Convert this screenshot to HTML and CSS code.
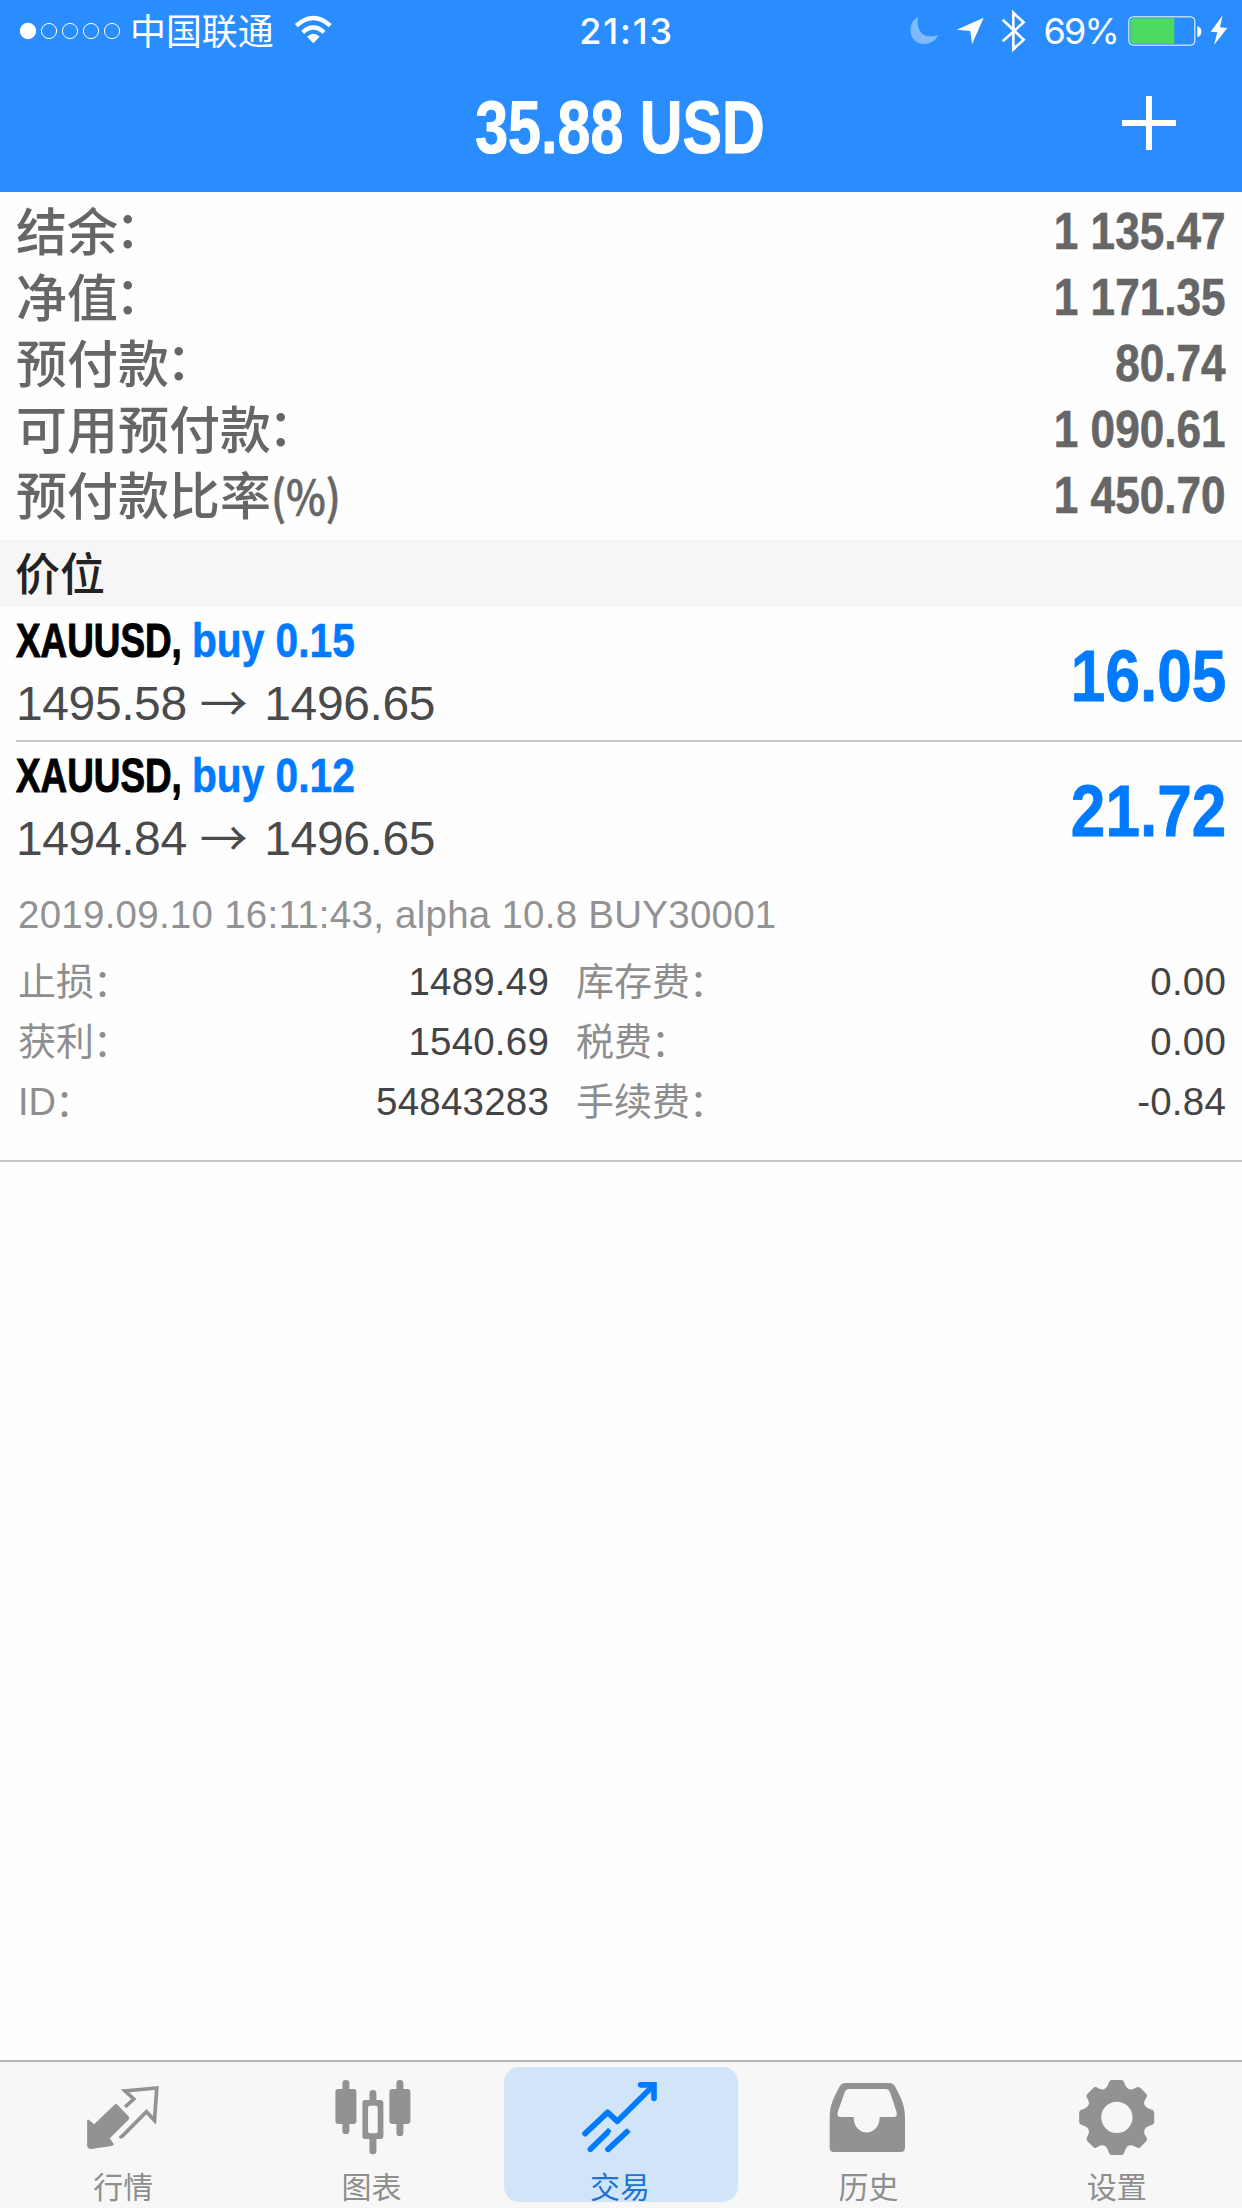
FILE: index.html
```html
<!DOCTYPE html>
<html lang="zh-CN">
<head>
<meta charset="utf-8">
<title>交易</title>
<link rel="stylesheet" href="styles.css">
</head>
<body>
<div class="app">
  <header class="header">
    <div class="status">
      <div class="status-left">
        <svg class="signal" viewBox="0 0 102 18"><circle cx="9" cy="9" r="8.2" fill="#fff"/><g fill="none" stroke="#fff" stroke-width="1"><circle cx="30" cy="9" r="7.6"/><circle cx="51" cy="9" r="7.6"/><circle cx="72" cy="9" r="7.6"/><circle cx="93" cy="9" r="7.6"/></g></svg>
        <span class="carrier">中国联通</span>
        <svg class="wifi" viewBox="880 45 116 88"><g fill="none" stroke="#fff" stroke-width="13"><path d="M887 77Q938 31 989 77"/><path d="M906 97Q938 68 970 97"/></g><path d="M919 110Q938 92 957 110L938 130Z" fill="#fff"/></svg>
      </div>
      <span class="time">21:13</span>
      <div class="status-right">
        <svg class="moon" viewBox="207 48 87 87"><path d="M232 51C205 62 204 98 216 116C232 139 277 139 292 104C272 114 246 109 236 92C229 79 228 64 232 51Z" fill="#7fb9ff"/></svg>
        <svg class="locate" viewBox="344 52 84 84"><path d="M427 54L346 90L387 94L392 134Z" fill="#fff"/></svg>
        <svg class="bluetooth" viewBox="478 28 76 126"><path d="M483 57L546 117L515 146V36L546 65L483 122" fill="none" stroke="#fff" stroke-width="8"/></svg>
        <span class="percent">69%</span>
        <svg class="battery" viewBox="857 46 222 90"><rect x="859.5" y="48.500" width="198" height="85" rx="12" fill="none" stroke="#fff" stroke-width="3"/><path d="M872 53H996V129H872Q864 129 864 121V61Q864 53 872 53Z" fill="#4cd964"/><path d="M1065 77Q1077 80 1077 93Q1077 106 1065 109Z" fill="#fff"/></svg>
        <svg class="bolt" viewBox="1104 45 54 92"><path d="M1142 46L1106 95L1126 97L1116 135L1156 84L1134 82Z" fill="#fff"/></svg>
      </div>
    </div>
    <div class="nav">
      <h1 class="title">35.88 USD</h1>
      <svg class="plus" viewBox="0 0 54 54"><path d="M27 0V54M0 27H54" stroke="#fff" stroke-width="6"/></svg>
    </div>
  </header>

  <main class="content">
    <section class="summary">
      <div class="sum-row"><span class="sum-label">结余<span class="colon">：</span></span><span class="sum-value">1 135.47</span></div>
      <div class="sum-row"><span class="sum-label">净值<span class="colon">：</span></span><span class="sum-value">1 171.35</span></div>
      <div class="sum-row"><span class="sum-label">预付款<span class="colon">：</span></span><span class="sum-value">80.74</span></div>
      <div class="sum-row"><span class="sum-label">可用预付款<span class="colon">：</span></span><span class="sum-value">1 090.61</span></div>
      <div class="sum-row"><span class="sum-label">预付款比率<span class="unit">(%)</span></span><span class="sum-value">1 450.70</span></div>
    </section>
    <h2 class="section-title">价位</h2>
    <article class="position bordered">
      <div>
        <div class="symbol"><span class="name">XAUUSD,</span><span class="side">buy 0.15</span></div>
        <div class="prices"><span>1495.58</span><span class="arrow">→</span><span>1496.65</span></div>
      </div>
      <div class="profit">16.05</div>
    </article>
    <article class="position">
      <div>
        <div class="symbol"><span class="name">XAUUSD,</span><span class="side">buy 0.12</span></div>
        <div class="prices"><span>1494.84</span><span class="arrow">→</span><span>1496.65</span></div>
      </div>
      <div class="profit">21.72</div>
    </article>
    <section class="details">
      <div class="comment">2019.09.10 16:11:43, alpha 10.8 BUY30001</div>
      <div class="grid">
        <span class="label">止损<span class="colon">：</span></span><span class="value">1489.49</span><span class="label">库存费<span class="colon">：</span></span><span class="value">0.00</span>
        <span class="label">获利<span class="colon">：</span></span><span class="value">1540.69</span><span class="label">税费<span class="colon">：</span></span><span class="value">0.00</span>
        <span class="label">ID<span class="colon">：</span></span><span class="value">54843283</span><span class="label">手续费<span class="colon">：</span></span><span class="value">-0.84</span>
      </div>
    </section>
  </main>

  <nav class="tabs">
    <div class="tab">
      <svg class="icon" viewBox="252.600 105 240 255"><path d="M267 239L283 253L344 194Q348 190 353 194L386 229Q391 234 386 239L330 295L342 312Q342 317 336 318L274 327Q262 327 262 316V242Q262 237 267 239Z" fill="#929292"/><g fill="none" stroke="#929292" stroke-width="11"><path d="M376 201L402 177L376 153L471 144L464 241L440 215L365 291"/></g><circle cx="375" cy="153" r="5.500" fill="#929292"/><circle cx="464" cy="241" r="5.500" fill="#929292"/><circle cx="363" cy="291" r="5.500" fill="#929292"/></svg>
      <span class="tab-label">行情</span>
    </div>
    <div class="tab">
      <svg class="icon" viewBox="997.800 105 240 255"><g fill="#929292"><rect x="1005" y="147" width="63" height="105" rx="9"/><rect x="1026" y="120" width="21" height="162" rx="10"/><rect x="1167" y="147" width="63" height="105" rx="9"/><rect x="1188" y="120" width="21" height="168" rx="10"/><rect x="1107" y="150" width="21" height="45" rx="10"/><rect x="1107" y="285" width="21" height="58" rx="10"/><path fill-rule="evenodd" d="M1094 180H1140Q1149 180 1149 189V288Q1149 297 1140 297H1094Q1086 297 1086 288V189Q1086 180 1094 180ZM1109 197Q1103 197 1103 203V274Q1103 280 1109 280H1126Q1132 280 1132 274V203Q1132 197 1126 197Z"/></g></svg>
      <span class="tab-label">图表</span>
    </div>
    <div class="tab active">
      <svg class="icon" viewBox="303 105 240 255"><g fill="none" stroke="#007aff" stroke-width="17" stroke-linecap="round"><path d="M315 281L383 217L412 244L516 141" stroke-linejoin="round"/><path d="M482 134.500H522V175"/><path d="M331 328L381 279M384 328L440 276"/></g><path d="M376 272L384 263L395 273L387 282ZM433 272L441 265L452 275L444 283Z" fill="#007aff"/></svg>
      <span class="tab-label">交易</span>
    </div>
    <div class="tab">
      <svg class="icon" viewBox="148 105 240 255"><path fill-rule="evenodd" fill="#929292" d="M198 129H328Q341 129 347 141C362 169 376 195 376 232V323Q376 336 362 336H163Q150 336 150 323V232C150 195 164 169 179 141Q185 129 198 129ZM209 147Q199 147 195 157L174 217Q171 231 182 231H222C222 293 300 293 300 231H342Q354 231 351 217L331 157Q327 147 317 147Z"/></svg>
      <span class="tab-label">历史</span>
    </div>
    <div class="tab">
      <svg class="icon" viewBox="893.400 105 240 255"><path fill-rule="evenodd" fill="#929292" d="M994 120H1024Q1029 120 1031 125L1035 136Q1044 154 1061 146L1072 141Q1077 140 1081 144L1098 161Q1102 165 1100 170L1094 180Q1086 196 1106 206L1116 209Q1122 212 1122 218V246Q1122 252 1116 254L1106 258Q1086 266 1094 284L1100 295Q1102 300 1098 304L1081 321Q1077 325 1072 323L1061 318Q1044 310 1035 329L1031 340Q1029 345 1024 345H994Q989 345 987 340L983 329Q974 310 957 318L948 323Q943 325 939 321L922 304Q918 300 919 295L924 284Q932 266 913 258L903 254Q897 252 897 246V218Q897 212 903 209L913 206Q932 196 924 180L919 170Q918 165 922 161L939 144Q943 140 948 141L957 146Q974 154 983 136L987 125Q989 120 994 120ZM1010 185A47 47 0 1 0 1010 279A47 47 0 1 0 1010 185Z"/></svg>
      <span class="tab-label">设置</span>
    </div>
  </nav>
</div>
</body>
</html>
```
FILE: styles.css
```css
* { box-sizing: border-box; margin: 0; padding: 0; }

body {
  width: 1242px;
  height: 2208px;
  background: #fefefe;
  font-family: "Liberation Sans", "Noto Sans CJK SC", sans-serif;
  white-space: nowrap;
}

svg { display: block; flex: none; overflow: visible; }

.app { display: flex; flex-direction: column; height: 2208px; overflow: hidden; }

/* header */
.header { height: 192px; background: #298cff; color: #fff; flex: none; }
.status { display: grid; grid-template-columns: 1fr auto 1fr; height: 60px; align-items: center; }
.status-left { display: flex; align-items: center; padding-left: 19px; }
.signal { width: 102px; height: 18px; }
.carrier { margin: -3px 0 0 9px; font: 35.900px/60px "Noto Sans CJK SC", sans-serif; }
.wifi { width: 38.700px; height: 29.300px; margin: -2px 0 0 20px; }
.time { font: 500 36px/60px Inter, sans-serif; padding-left: 11px; letter-spacing: 1.800px; }
.status-right { display: flex; align-items: center; justify-content: flex-end; padding-right: 14px; }
.moon { width: 29px; height: 29px; }
.locate { width: 28px; height: 28px; margin: 1px 0 0 17px; }
.bluetooth { width: 25.300px; height: 42px; margin-left: 17px; }
.percent { font: 36px/60px Inter, sans-serif; letter-spacing: -1.800px; margin: 1px 0 0 17px; }
.battery { width: 74px; height: 30px; margin-left: 10px; }
.bolt { width: 18px; height: 30.600px; margin-left: 8px; }

.nav { display: grid; grid-template-columns: 120px 1fr 120px; grid-template-rows: 132px; height: 132px; align-items: center; }
.title {
  grid-column: 2;
  justify-self: center;
  font: bold 74px/132px "Liberation Sans", sans-serif;
  padding-top: 3px;
  margin-left: -3px;
  transform: scaleX(.8);
  -webkit-text-stroke: 1px;
}
.plus { width: 54px; height: 54px; margin-top: -6px; }

/* account summary */
.summary { height: 348px; padding: 6px 16px 0; color: #666; }
.sum-row { display: flex; justify-content: space-between; height: 66px; line-height: 66px; }
.sum-label { font-size: 51px; font-weight: 500; padding-top: 3px; }
.unit { display: inline-block; font-family: "Noto Sans CJK SC", sans-serif; font-size: 47px; line-height: 1; transform: scaleX(.9); transform-origin: left; -webkit-text-stroke: .6px; }
.sum-value { font-size: 51px; font-weight: bold; padding-top: 1px; transform: scaleX(.865); transform-origin: right; -webkit-text-stroke: .6px; }
.colon { line-height: 0; }
.sum-label .colon { vertical-align: 3px; margin-left: -3px; }
.label .colon { vertical-align: -1px; margin-left: -1px; }

.section-title {
  height: 67px;
  padding-left: 15px;
  background: #f6f6f6;
  color: #222;
  font: 500 45px/63px "Noto Sans CJK SC", sans-serif;
}

/* positions */
.position { display: flex; justify-content: space-between; height: 134px; margin-left: 16px; padding: 4px 16px 0 0; }
.position.bordered { height: 135px; border-bottom: 2px solid #c8c7cc; }
.symbol { display: flex; height: 60px; font: bold 49px/58px "Liberation Sans", sans-serif; color: #000; }
.name { width: 176px; transform: scaleX(.752); transform-origin: left; -webkit-text-stroke: 1px; }
.side { transform: scaleX(.83); transform-origin: left; -webkit-text-stroke: .6px; }
.side, .profit { color: #007aff; }
.prices { display: flex; height: 66px; font-size: 48px; line-height: 66px; letter-spacing: -.4px; color: #4a4a4a; }
.arrow { font-family: "Noto Sans CJK SC", sans-serif; margin: -4px 17px 0 13px; }
.profit { font: bold 72px/130px "Liberation Sans", sans-serif; transform: scaleX(.862); transform-origin: right; -webkit-text-stroke: .8px; }

/* expanded position */
.details { height: 286px; padding: 9px 16px 0 18px; border-bottom: 2px solid #c8c8c8; }
.comment { height: 60px; font-size: 38.500px; line-height: 60px; letter-spacing: .25px; color: #929292; }
.grid { display: grid; grid-template-columns: 269px 262px 270px 1fr; grid-auto-rows: 60px; margin-top: 7px; }
.label { font: 38px/60px "Liberation Sans", "Noto Sans CJK SC", sans-serif; color: #8e8e8e; }
.value { font-size: 38.500px; line-height: 60px; letter-spacing: .2px; color: #444; text-align: right; }
.label:nth-child(4n+3) { padding-left: 27px; }

/* tab bar */
.tabs { display: grid; grid-template-columns: repeat(5, 1fr); height: 148px; margin-top: auto; border-top: 2px solid #b2b4b2; background: #f7f7f7; padding-top: 5px; }
.tab { display: flex; flex-direction: column; align-items: center; width: 234px; height: 135px; justify-self: center; padding-top: 8px; border-radius: 15px; color: #8e8e8e; }
.active { background: #d2e5f8; color: #1b74cf; }
.icon { width: 80px; height: 85px; }
.tab-label { font: 30px/50px "Noto Sans CJK SC", sans-serif; height: 50px; margin-right: 2px; }
```
